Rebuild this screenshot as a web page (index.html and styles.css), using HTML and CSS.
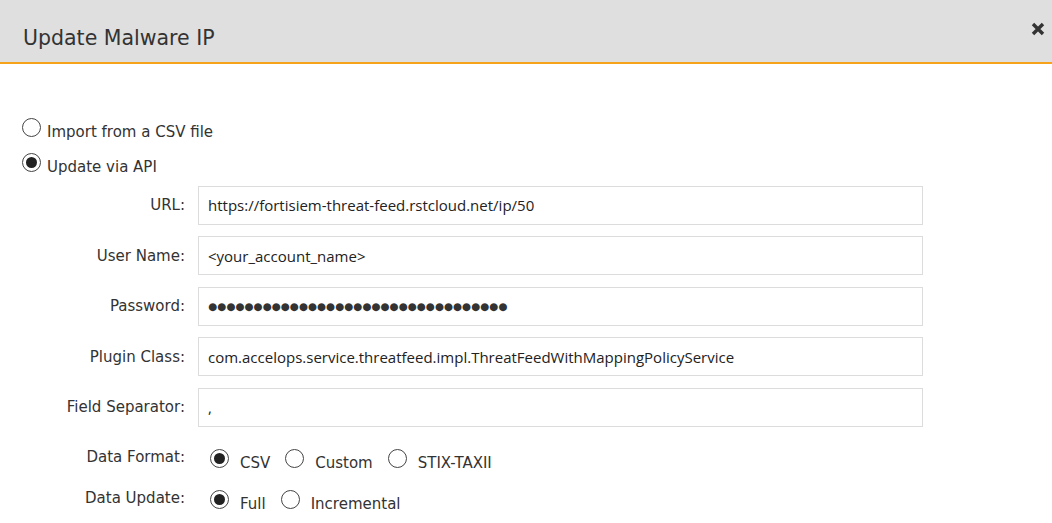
FILE: index.html
```html
<!DOCTYPE html>
<html>
<head>
<meta charset="utf-8">
<link rel="stylesheet" href="styles.css">
</head>
<body>
<div class="dialog">
  <div class="header">
    <div class="title">Update Malware IP</div>
    <svg class="close" width="14" height="14" viewBox="0 0 14 14"><path d="M2 2 L12 12 M12 2 L2 12" stroke="#333" stroke-width="3.4" stroke-linecap="butt"/></svg>
  </div>
  <div class="body">
    <div class="choice"><span class="radio"></span><span>Import from a CSV file</span></div>
    <div class="choice"><span class="radio on"></span><span>Update via API</span></div>
    <div class="form">
      <div class="row"><div class="label">URL:</div><div class="input">https://fortisiem-threat-feed.rstcloud.net/ip/50</div></div>
      <div class="row"><div class="label">User Name:</div><div class="input">&lt;your_account_name&gt;</div></div>
      <div class="row"><div class="label">Password:</div><div class="input dots">●●●●●●●●●●●●●●●●●●●●●●●●●●●●●●●●●</div></div>
      <div class="row"><div class="label">Plugin Class:</div><div class="input">com.accelops.service.threatfeed.impl.ThreatFeedWithMappingPolicyService</div></div>
      <div class="row"><div class="label">Field Separator:</div><div class="input">,</div></div>
      <div class="row opts first"><div class="label">Data Format:</div>
        <div class="options">
          <span class="opt"><span class="radio on"></span>CSV</span>
          <span class="opt"><span class="radio"></span>Custom</span>
          <span class="opt"><span class="radio"></span>STIX-TAXII</span>
        </div>
      </div>
      <div class="row opts"><div class="label">Data Update:</div>
        <div class="options">
          <span class="opt"><span class="radio on"></span>Full</span>
          <span class="opt"><span class="radio"></span>Incremental</span>
        </div>
      </div>
    </div>
  </div>
</div>
</body>
</html>
```
FILE: styles.css
```css
html, body { margin: 0; padding: 0; background: #fff; }
body { font-family: "DejaVu Sans", sans-serif; color: #333; overflow: hidden; }
.dialog { width: 1052px; height: 523px; }
.header {
  height: 62px;
  background: #dfdfdf;
  border-bottom: 2px solid #f7a21b;
  display: flex;
  align-items: flex-start;
  justify-content: space-between;
}
.title { font-family: "DejaVu Sans", sans-serif; font-size: 20.5px; margin: 26px 0 0 23px; color: #333; }
.close { margin: 22px 7px 0 0; }
.body { padding: 54px 0 0 22px; }
.choice { display: flex; align-items: baseline; font-size: 15px; height: 20px; margin-bottom: 15px; }
.choice .radio { margin-right: 6px; }
.radio {
  display: inline-block; box-sizing: border-box; width: 19px; height: 19px;
  border: 1px solid #444; border-radius: 50%; position: relative; flex: none; background: #fff;
}
.radio.on::after {
  content: ""; position: absolute; left: 3px; top: 3px; width: 11px; height: 11px; border-radius: 50%; background: #222;
}
.form { margin-top: -2px; }
.row { display: flex; align-items: center; height: 38px; margin-bottom: 12.5px; }
.label { width: 163px; text-align: right; font-size: 15px; padding-right: 13px; flex: none; }
.input {
  width: 725px; height: 39px; box-sizing: border-box; border: 1px solid #dcdcdc; padding: 0 9px;
  display: flex; align-items: center; font-family: "Open Sans", sans-serif; font-size: 15px; color: #222; white-space: nowrap; overflow: hidden;
}
.dots { font-family: "DejaVu Sans", sans-serif; font-size: 10.4px; color: #333; }
.row.opts { height: 22px; margin-bottom: 18.5px; align-items: flex-start; }
.row.opts.first { margin-top: 22px; }
.options { display: flex; padding-left: 12px; padding-top: 1px; }
.opt { display: flex; align-items: baseline; font-size: 15px; margin-right: 15px; }
.opt .radio { margin-right: 11px; }
```
